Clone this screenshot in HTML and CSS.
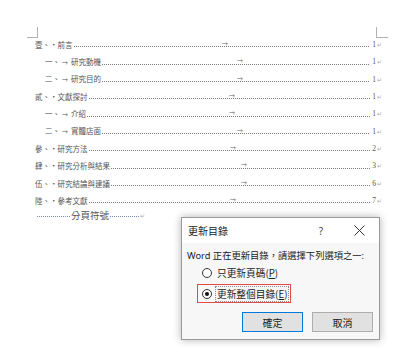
FILE: index.html
```html
<!DOCTYPE html>
<html lang="zh-Hant">
<head>
  <meta charset="UTF-8" />
  <title>更新目錄</title>
  <link rel="stylesheet" href="styles.css">
</head>
<body>
  <div class="page">
    <div class="marks">
      <div class="mark-l"></div>
      <div class="mark-r"></div>
    </div>

    <!-- Table of contents -->
    <div class="toc">
      <div class="toc-row" style="--tab:187px"><span class="lbl">壹、·前言</span><span class="lead"></span><span class="tab">→</span><span class="pg">1</span><span class="ret">↵</span></div>
      <div class="toc-row lv2" style="--tab:202px"><span class="lbl">一、<span class="arr">→</span>研究動機</span><span class="lead"></span><span class="tab">→</span><span class="pg">1</span><span class="ret">↵</span></div>
      <div class="toc-row lv2" style="--tab:202px"><span class="lbl">二、<span class="arr">→</span>研究目的</span><span class="lead"></span><span class="tab">→</span><span class="pg">1</span><span class="ret">↵</span></div>
      <div class="toc-row" style="--tab:194px"><span class="lbl">貳、·文獻探討</span><span class="lead"></span><span class="tab">→</span><span class="pg">1</span><span class="ret">↵</span></div>
      <div class="toc-row lv2" style="--tab:194px"><span class="lbl">一、<span class="arr">→</span>介紹</span><span class="lead"></span><span class="tab">→</span><span class="pg">1</span><span class="ret">↵</span></div>
      <div class="toc-row lv2" style="--tab:202px"><span class="lbl">二、<span class="arr">→</span>實體店面</span><span class="lead"></span><span class="tab">→</span><span class="pg">1</span><span class="ret">↵</span></div>
      <div class="toc-row" style="--tab:195px"><span class="lbl">參、·研究方法</span><span class="lead"></span><span class="tab">→</span><span class="pg">2</span><span class="ret">↵</span></div>
      <div class="toc-row" style="--tab:206px"><span class="lbl">肆、·研究分析與結果</span><span class="lead"></span><span class="tab">→</span><span class="pg">3</span><span class="ret">↵</span></div>
      <div class="toc-row" style="--tab:206px"><span class="lbl">伍、·研究結論與建議</span><span class="lead"></span><span class="tab">→</span><span class="pg">6</span><span class="ret">↵</span></div>
      <div class="toc-row" style="--tab:195px"><span class="lbl">陸、·參考文獻</span><span class="lead"></span><span class="tab">→</span><span class="pg">7</span><span class="ret">↵</span></div>
      <div class="brk">
        <span class="brk-dots"></span>
        <span class="brk-text">分頁符號</span>
        <span class="brk-dots short"></span>
        <span class="ret">↵</span>
      </div>
    </div>
  </div>

  <!-- Update table of contents dialog -->
  <div class="dialog">
    <div class="dlg-title">
      <span class="dlg-name">更新目錄</span>
      <span class="dlg-help">?</span>
      <svg class="dlg-close" width="11" height="11" viewBox="0 0 11 11">
        <path d="M0.5 0.5 L10.5 10.5 M10.5 0.5 L0.5 10.5" stroke="#333" stroke-width="1" fill="none"/>
      </svg>
    </div>
    <div class="dlg-body">
      <div class="msg">Word 正在更新目錄，請選擇下列選項之一:</div>
      <div class="options">
        <div class="opt">
          <span class="radio"></span>
          <span class="opt-text">只更新頁碼(<u>P</u>)</span>
        </div>
        <div class="opt picked">
          <span class="radio on"></span>
          <span class="opt-text focus">更新整個目錄(<u>E</u>)</span>
        </div>
      </div>
      <div class="buttons">
        <button class="btn primary">確定</button>
        <button class="btn">取消</button>
      </div>
    </div>
  </div>
</body>
</html>
```

FILE: styles.css
```css
* {
  box-sizing: border-box;
  margin: 0;
  padding: 0;
}

body {
  font-family: "Noto Sans CJK TC", "Noto Sans", sans-serif;
  background-color: #ffffff;
  width: 400px;
  height: 355px;
  overflow: hidden;
  position: relative;
}

.page {
  padding: 27px 12px 0 27px;
}

/* Page corner marks */
.marks {
  display: flex;
  justify-content: space-between;
  height: 11px;
}

.mark-l {
  width: 11px;
  height: 11px;
  border-right: 1px solid #b0b0b0;
  border-bottom: 1px solid #b0b0b0;
}

.mark-r {
  width: 12px;
  height: 11px;
  border-left: 1px solid #b0b0b0;
  border-bottom: 1px solid #b0b0b0;
}

/* TOC */
.toc {
  margin-top: -2px;
  padding: 0 6px 0 8px;
}

.toc-row {
  position: relative;
  display: flex;
  align-items: center;
  height: 17.33px;
  line-height: 17.33px;
  font-size: 7.5px;
  color: #555;
}

.toc-row.lv2 {
  padding-left: 10px;
}

.arr {
  font-size: 6px;
  margin: 0 3px 0 2px;
}

.lead {
  flex: 1;
  align-self: stretch;
  margin: 0 2px 0 1px;
  background-image: linear-gradient(to right, #7a7a7a 1px, transparent 1px);
  background-size: 2px 1px;
  background-repeat: repeat-x;
  background-position: left bottom 6px;
}

.tab {
  position: absolute;
  top: -1px;
  left: var(--tab);
  font-size: 6px;
  color: #666;
}

.pg {
  font-family: "Liberation Serif", serif;
  font-size: 7.5px;
}

.ret {
  font-size: 6px;
  color: #aaa;
  margin-left: 1px;
}

/* Page break marker */
.brk {
  display: flex;
  align-items: center;
  height: 12px;
  padding-left: 2px;
  color: #555;
}

.brk-dots {
  width: 33px;
  height: 1px;
  margin-top: 3px;
  background-image: linear-gradient(to right, #7d88ad 1px, transparent 1px);
  background-size: 2px 1px;
}

.brk-dots.short {
  width: 29px;
}

.brk-text {
  font-size: 9.5px;
  line-height: 12px;
  margin: 0 1px;
}

/* Dialog */
.dialog {
  position: absolute;
  left: 181px;
  top: 217px;
  width: 199px;
  height: 123px;
  border: 1px solid #9a9a9a;
  background-color: #f7f7f7;
  box-shadow: 0 0 8px rgba(0, 0, 0, 0.3);
  font-family: "Noto Sans", "Noto Sans CJK TC", sans-serif;
  font-size: 10px;
  color: #222;
}

.dlg-title {
  display: flex;
  align-items: center;
  height: 25px;
  padding: 0 14px 0 6px;
  background-color: #fff;
}

.dlg-name {
  flex: 1;
  font-family: "Noto Sans CJK TC", sans-serif;
}

.dlg-help {
  font-size: 10px;
  color: #444;
  margin-right: 31px;
}

.dlg-body {
  padding: 5px 6px 0 5px;
}

.msg {
  font-size: 9.3px;
  line-height: 16px;
  white-space: nowrap;
}

.options {
  margin-left: 10px;
}

.opt {
  display: flex;
  align-items: center;
  height: 18px;
  padding-left: 5px;
}

.opt.picked {
  display: inline-flex;
  height: 19px;
  margin-top: 2px;
  padding: 0 1px 0 4px;
  border: 1px solid #e04b4b;
}

.radio {
  width: 10px;
  height: 10px;
  border: 1px solid #333;
  border-radius: 50%;
  background-color: #fff;
  margin-right: 3px;
  display: flex;
  align-items: center;
  justify-content: center;
}

.radio.on::after {
  content: "";
  width: 4px;
  height: 4px;
  border-radius: 50%;
  background-color: #111;
}

.opt-text {
  font-family: "Noto Sans CJK TC", sans-serif;
  font-size: 9.7px;
  line-height: 14px;
  padding: 0 1px;
  border: 1px solid transparent;
}

.opt-text.focus {
  border: 1px dotted #888;
}

.buttons {
  display: flex;
  justify-content: flex-end;
  gap: 9px;
  margin-top: 9px;
}

.btn {
  width: 61px;
  height: 20px;
  font-family: "Noto Sans CJK TC", sans-serif;
  font-size: 10px;
  color: #222;
  background-color: #e1e1e1;
  border: 1px solid #adadad;
}

.btn.primary {
  border-color: #0078d7;
}
```
